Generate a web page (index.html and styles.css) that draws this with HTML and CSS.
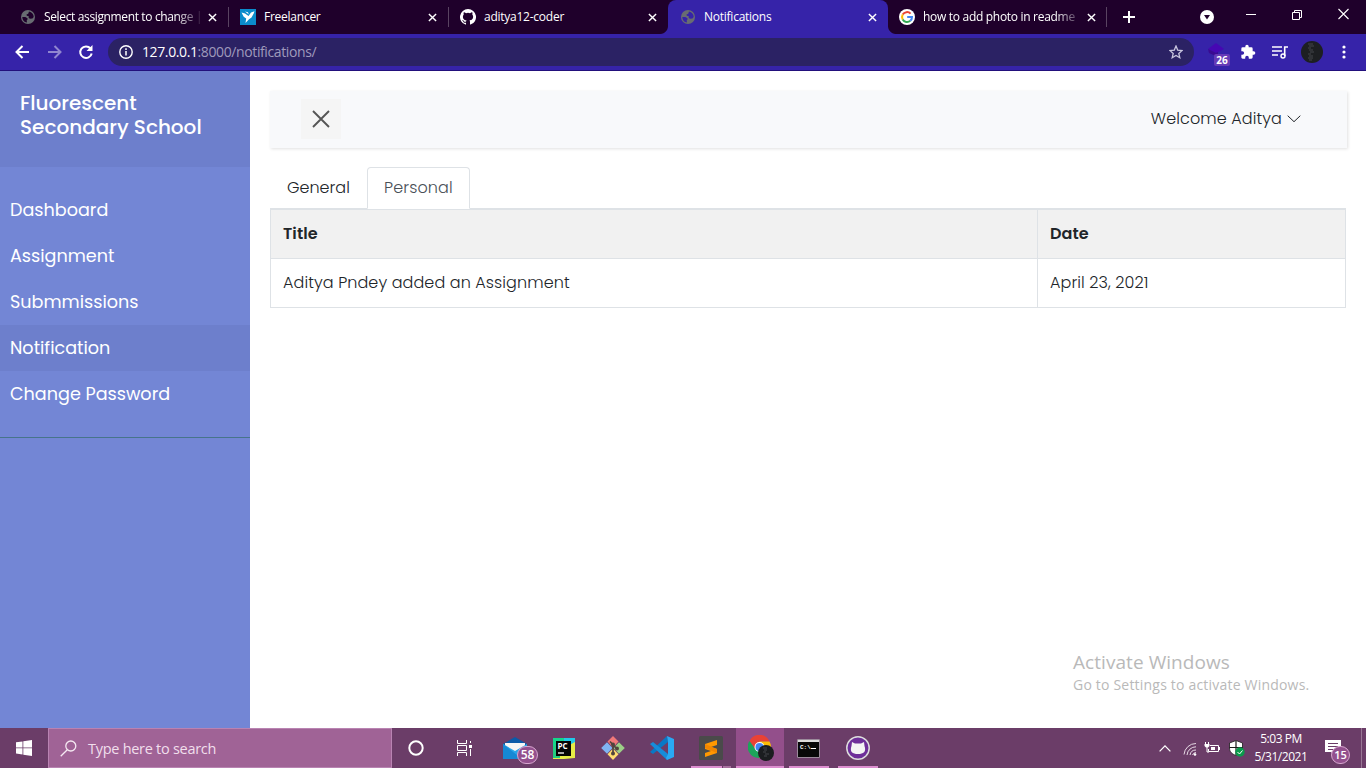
FILE: index.html
```html
<!DOCTYPE html>
<html lang="en">
<head>
<meta charset="utf-8">
<title>Notifications</title>
<link rel="stylesheet" href="styles.css">
</head>
<body>
<svg class="defs" width="0" height="0">
  <symbol id="globe" viewBox="0 0 16 16"><circle cx="8" cy="8" r="7" fill="#686c72"/><path d="M9 2.500c3 .5 4.700 2.800 4.700 5.500l-1.200 1.500-2.700.3-1.300-1.300.3-1.300-2-.4L6.500 5.500l1.700-.7zM2.300 8h3l2.200 1.200v1.300l-.8.800.3 2.200C4.300 13.300 2.300 11 2.300 8z" fill="currentColor"/></symbol>
  <symbol id="x" viewBox="0 0 10 10"><path d="m1 1 8 8M9 1 1 9" stroke="#fff" stroke-width="1.600" fill="none"/></symbol>
</svg>
<header class="tabs">
  <div class="tab"><svg class="fav"><use href="#globe"/></svg><span class="tab-title fade t1">Select assignment to change |</span><svg class="close"><use href="#x"/></svg></div>
  <div class="tab"><svg class="fav" viewBox="0 0 16 16"><path d="M0 0h16v16H0z" fill="#0b8bcb"/><path d="m1.500 3.500 3.500 1 3.500 2.500L11 3.500l3.500-1.200-.8 2.200-2.200 4-2.500 1.700L5.500 14l.7-4.500-2.500-1.700z" fill="#fff"/><path d="m5 2.500 3 .8.800 2.200z" fill="#fff"/></svg><span class="tab-title t2">Freelancer</span><svg class="close"><use href="#x"/></svg></div>
  <div class="tab nosep"><svg class="fav" viewBox="0 0 16 16"><path fill="#fff" d="M8 0a8 8 0 0 0-2.530 15.590c.400.070.550-.170.550-.380v-1.490c-2.230.480-2.700-.950-2.700-.950-.360-.920-.890-1.170-.890-1.170-.730-.500.050-.490.050-.490.810.060 1.240.830 1.240.830.720 1.230 1.870.880 2.330.670.070-.520.280-.880.510-1.080-1.780-.200-3.640-.890-3.640-3.950 0-.880.310-1.590.820-2.150-.080-.200-.360-1.020.080-2.120 0 0 .670-.210 2.200.820a7.600 7.600 0 0 1 4 0c1.530-1.040 2.200-.820 2.200-.820.440 1.100.160 1.920.080 2.120.510.560.820 1.270.820 2.150 0 3.070-1.870 3.750-3.650 3.950.290.250.540.730.540 1.480v2.200c0 .210.150.460.550.380A8 8 0 0 0 8 0"/></svg><span class="tab-title t3">aditya12-coder</span><svg class="close"><use href="#x"/></svg></div>
  <div class="tab active"><svg class="fav"><use href="#globe"/></svg><span class="tab-title t4">Notifications</span><svg class="close"><use href="#x"/></svg></div>
  <div class="tab last"><svg class="fav" viewBox="0 0 16 16"><circle cx="8" cy="8" r="8" fill="#fff"/><g fill="none" stroke-width="2"><path d="M11.600 4.600A5 5 0 0 0 3.700 5.600" stroke="#ea4335"/><path d="M3.700 5.600a5 5 0 0 0 0 4.800" stroke="#fbbc05"/><path d="M3.700 10.400a5 5 0 0 0 7.600 1.400" stroke="#34a853"/><path d="M11.300 11.800A5 5 0 0 0 13 8H8.200" stroke="#4285f4"/></g></svg><span class="tab-title fade t5">how to add photo in readme</span><svg class="close"><use href="#x"/></svg></div>
  <svg class="plus" viewBox="0 0 12 12"><path d="M6 0v12M0 6h12" stroke="#fff" stroke-width="2"/></svg>
  <svg class="guest" viewBox="0 0 14 14"><circle cx="7" cy="7" r="7" fill="#fff"/><path d="M4 5h6L7 9.500z" fill="#1f002b"/></svg>
  <svg class="win" viewBox="0 0 104 14"><g fill="none" stroke="#fff"><path d="M0 7.500h10M46.500 5.500h7v7h-7zM48.500 5.500v-2h7v7h-2"/><path d="m92.500 2 10 10m0-10-10 10" stroke-width="1.100"/></g></svg>
</header>
<nav class="toolbar">
  <svg class="nav-icons" viewBox="0 0 80 16"><g fill="none" stroke="#fff" stroke-width="2"><path d="M14 8H2M7.500 2 1.500 8l6 6"/><path d="M33 8h12M39.500 2l6 6-6 6" opacity=".45"/><path d="M75.500 4.500A5.800 5.800 0 1 0 76.700 9.500"/></g><path d="M77.500 1v6h-6z" fill="#fff"/></svg>
  <div class="omnibox">
    <svg class="info" viewBox="0 0 14 14"><circle cx="7" cy="7" r="6.200" fill="none" stroke="#fff" stroke-width="1.400"/><path d="M7 6v4.500M7 3.300v1.600" stroke="#fff" stroke-width="1.500"/></svg>
    <span class="url"><b>127.0.0.1</b>:8000/notifications/</span>
    <svg class="star" viewBox="0 0 14 14"><path d="m7 1 1.700 4.100 4.400.400-3.300 2.900 1 4.300L7 10.400l-3.800 2.300 1-4.300L.900 5.500l4.400-.400z" fill="none" stroke="#c9c6df" stroke-width="1.300"/></svg>
  </div>
  <div class="ext"><svg viewBox="0 0 20 16"><path d="m1 7 8-6 8 6-8 4z" fill="#4607b3"/><path d="m1 7 8 4 2-1v5L2 11z" fill="#3a0a91"/></svg><span class="ext-count">26</span></div>
  <svg class="puzzle" viewBox="0 0 24 24"><path fill="#fff" d="M20.500 11H19V7a2 2 0 0 0-2-2h-4V3.500a2.500 2.500 0 0 0-5 0V5H4a2 2 0 0 0-2 2v3.800h1.500a2.700 2.700 0 0 1 0 5.400H2V20c0 1.100.9 2 2 2h3.800v-1.500a2.700 2.700 0 0 1 5.400 0V22H17a2 2 0 0 0 2-2v-4h1.500a2.500 2.500 0 0 0 0-5"/></svg>
  <svg class="media" viewBox="0 0 16 14"><path d="M0 2h10M0 6h10M0 10h6" stroke="#fff" stroke-width="1.600"/><path d="M12.700 11V2H16" fill="none" stroke="#fff" stroke-width="1.600"/><circle cx="11" cy="11" r="2" fill="none" stroke="#fff" stroke-width="1.400"/></svg>
  <svg class="avatar" viewBox="0 0 22 22"><circle cx="11" cy="11" r="11" fill="#1d1f22"/><path d="M7 3h5M8 5h5M7 7h3M8 9h4M9 11h4M7 13h3M8 15h4M7 17h5M8 19h3" stroke="#45474b"/></svg>
  <svg class="kebab" viewBox="0 0 4 14"><g fill="#fff"><circle cx="2" cy="2" r="1.600"/><circle cx="2" cy="7" r="1.600"/><circle cx="2" cy="12" r="1.600"/></g></svg>
</nav>
<div class="page">
  <aside class="sidebar">
    <div class="brand"><h3>Fluorescent Secondary School</h3></div>
    <ul class="menu"><li>Dashboard</li><li>Assignment</li><li>Submmissions</li><li class="current">Notification</li><li>Change Password</li></ul>
  </aside>
  <main class="content">
    <div class="topbar"><button class="toggle"><svg viewBox="0 0 18 18"><path d="m1 1 16 16M17 1 1 17" stroke="#555" stroke-width="1.900"/></svg></button><div class="welcome"><span>Welcome Aditya</span><svg viewBox="0 0 14 8"><path d="m.7.700 6.300 6 6.300-6" fill="none" stroke="#212529"/></svg></div></div>
    <div class="nav-tabs"><a class="nav-link">General</a><a class="nav-link selected">Personal</a></div>
    <div class="table">
      <div class="row head"><div>Title</div><div>Date</div></div>
      <div class="row"><div>Aditya Pndey added an Assignment</div><div>April 23, 2021</div></div>
    </div>
  </main>
  <div class="watermark"><p class="wm1">Activate Windows</p><p class="wm2">Go to Settings to activate Windows.</p></div>
</div>
<footer class="taskbar">
  <div class="start"><svg width="16" height="16" viewBox="0 0 16 16"><path fill="#fff" d="m0 2.300 6.500-.9v6.100H0zM7.300 1.200 16 0v7.500H7.300zM0 8.300h6.500v6.200L0 13.600zM7.300 8.300H16V16l-8.700-1.200z"/></svg></div>
  <div class="search"><svg width="17" height="17" viewBox="0 0 17 17"><g fill="none" stroke="#f5e9f2" stroke-width="1.300"><circle cx="10.800" cy="6" r="5"/><path d="m7.300 9.700-6.600 6.500"/></g></svg><span>Type here to search</span></div>
  <div class="sys"><svg width="16" height="16" viewBox="0 0 16 16"><circle cx="8" cy="8" r="6.700" fill="none" stroke="#fff" stroke-width="2"/></svg></div>
  <div class="sys view"><svg width="17" height="16" viewBox="0 0 17 16"><path d="M1.500 0v3.500h9V0M1.500 16v-3.500h9V16M1.500 5.500h9v5h-9zM14.500 1v2M14.500 9v7" fill="none" stroke="#fff"/><path d="M13 5h3v3h-3z" fill="#fff"/></svg></div>
  <div class="app"><svg width="24" height="22" viewBox="0 0 24 22"><path d="M0 7 12 0l12 7v15H0z" fill="#0a5ba9"/><path d="M2 6h20v8H2z" fill="#f5f5f5"/><path d="m0 7 12 7 12-7v15H0z" fill="#27a5e9"/><path d="m0 7 19 15H0z" fill="#1688d4"/></svg><span class="badge mail">58</span></div>
  <div class="app"><svg width="22" height="22" viewBox="0 0 22 22"><path d="M0 1h11v10H0z" fill="#15d68b"/><path d="M11 1h11v9L11 12z" fill="#20caea"/><path d="M0 11h11l11-6v16l-11 1H0z" fill="#e6ed45"/><path d="M0 9h7v12H0z" fill="#22cd80"/><path d="M3 4h15v15H3z" fill="#050505"/><path d="M5 16h6" stroke="#fff" stroke-width="1.300"/><text x="4.500" y="12" class="pc">PC</text></svg></div>
  <div class="app"><svg width="24" height="24" viewBox="0 0 24 24"><path d="m12 0 5.500 5.500-5.500 6-5.500-6z" fill="#f07879"/><path d="M6 6.200 11.500 12 6 17.800.2 12z" fill="#80b5f3"/><path d="m18 6.200 5.800 5.800-5.800 5.800-5.500-5.800z" fill="#9cce87"/><path d="m12 12.500 5.500 5.800L12 24l-5.500-5.700z" fill="#ffdc70"/><path d="M9 5.500 15 12m-3-3v9" stroke="#51443e" stroke-width="1.700"/><g fill="#51443e"><circle cx="12" cy="8.500" r="2"/><circle cx="16" cy="12.500" r="2"/><circle cx="12" cy="17.500" r="2"/></g></svg></div>
  <div class="app"><svg width="24" height="24" viewBox="0 0 24 24"><path d="M0 16 17 0l1 6L3 18z" fill="#0878c5"/><path d="m0 8 3-2 15 12-1 6z" fill="#168cda"/><path d="m17 0 7 3v18l-7 3-1-2 2-4V6z" fill="#29a9f4"/></svg></div>
  <div class="app sub"><svg width="24" height="24" viewBox="0 0 24 24"><rect width="24" height="24" rx="1.500" fill="#4a4a4a"/><path d="m6 8 12-4v5L12 11l6 2v4L6 21v-4l6-2-6-2z" fill="#ff9800"/><path d="m6 8 12 5v4L6 12z" fill="#f08600"/></svg></div>
  <div class="app chrome"><svg width="26" height="26" viewBox="0 0 26 26"><path d="M1.500 6A11 11 0 0 1 21.500 6.500H11L6.500 13.500z" fill="#e94235"/><path d="M21.500 6.500A11 11 0 0 1 11 23l5-8-5-8.500z" fill="#fbbc05"/><path d="M1.500 6A11 11 0 0 0 11 23l5-8H8z" fill="#1da45a"/><circle cx="11.500" cy="12" r="5" fill="#fff"/><circle cx="11.500" cy="12" r="4" fill="#4285f4"/><circle cx="18" cy="18" r="8" fill="#1b1d20"/><path d="M15 13h4M16 15h3M15 17h3M17 19h4M16 21h3" stroke="#44474b"/></svg></div>
  <div class="app cmd"><svg width="23" height="19" viewBox="0 0 23 19"><path d="M.5.500h22v18H.5z" fill="#080808" stroke="#9b8b9b"/><path d="M1 1h21v2H1z" fill="#ddd"/><text x="3" y="10" class="cmd-text">C:\</text><path d="M14 9.500h5" stroke="#fff"/></svg></div>
  <div class="app gh"><svg width="24" height="24" viewBox="0 0 24 24"><circle cx="12" cy="12" r="11.200" fill="#6e2f99" stroke="#ddd" stroke-width="1.500"/><path d="m6 6 3 1.500h6L18 6l.5 4c2 6-1 8-6.500 8s-8.500-2-6.500-8z" fill="#f4f4f4"/></svg></div>
  <div class="tray">
    <svg class="chev" width="12" height="7" viewBox="0 0 12 7"><path d="m.6 6.400 5.400-5.500 5.400 5.500" fill="none" stroke="#fff" stroke-width="1.300"/></svg>
    <svg class="wifi" width="14" height="14" viewBox="0 0 14 14"><g fill="none" stroke="#e6d9e5"><path d="M1 12.500A12 12 0 0 1 13 1.500M4 13A9 9 0 0 1 13 4.800M7 13a6 6 0 0 1 6-5M9.500 13a4 4 0 0 1 3.500-2.500"/></g><circle cx="12" cy="12.500" r="1.300" fill="#fff"/></svg>
    <svg class="battery" width="16" height="12" viewBox="0 0 16 12"><path d="M6 3.500h8.500v6h-10V7M1.500 0v2M4.500 0v2M3 5v5h2M15.500 5v3" fill="none" stroke="#fff"/><path d="M.5 2h5v2L4 5.500H2L.5 4zM7 5h4v3H7z" fill="#fff"/></svg>
    <svg class="shield" width="17" height="17" viewBox="0 0 17 17"><path d="m8 .5 6.500 2.500v5c0 4-2.500 6-6.500 7.500-4-1.500-6.500-3.500-6.500-7.500V3z" fill="#fff" stroke="#1a1a1a" stroke-width=".8"/><path d="M8 1v14M1.500 7.500h13" stroke="#1a1a1a" stroke-width="1.200"/><circle cx="12" cy="12" r="4.700" fill="#0a9a4b"/><path d="m9.500 12 2 2 3-3.500" fill="none" stroke="#fff"/></svg>
    <div class="clock"><span class="time">5:03 PM</span><span class="date">5/31/2021</span></div>
    <div class="notif"><svg width="16" height="16" viewBox="0 0 16 16"><path d="M0 0h16v12H9v3l-3-3H0z" fill="#fff"/><path d="M3 3.500h10M3 6.500h10M3 9.500h10" stroke="#6b3d68"/></svg><span class="badge note">15</span></div>
  </div>
</footer>
</body>
</html>
```
FILE: styles.css
```css
* { box-sizing: border-box; }
body { margin: 0; width: 1366px; height: 768px; overflow: hidden; display: flex; flex-direction: column; background: #fff; font-family: "Open Sans", sans-serif; }
span { white-space: nowrap; }
svg { display: block; flex: none; }
.defs { position: absolute; }
h3, p, ul { margin: 0; padding: 0; list-style: none; }

/* Browser tabs */
.tabs { height: 34px; flex: none; background: #1f002b; display: flex; align-items: center; padding-left: 8px; }
.tab { width: 220px; height: 34px; flex: none; display: flex; align-items: center; padding-left: 12px; color: #fff; font-size: 12px; background: linear-gradient(#594361, #594361) no-repeat right 7px / 1px 20px; }
.tab:first-child { width: 221px; }
.tab:nth-child(2) { padding-left: 11px; }
.tab.nosep { width: 219px; padding-left: 11px; background: radial-gradient(circle at 0 0, #1f002b 7.5px, #3623a9 8.5px) no-repeat right bottom / 8px 8px; }
.tab.active { background: #3623a9; border-radius: 8px 8px 0 0; }
.tab.last { width: 219px; padding-left: 11px; background: linear-gradient(#594361, #594361) no-repeat right 7px / 1px 20px, radial-gradient(circle at 8px 0, #1f002b 7.5px, #3623a9 8.5px) no-repeat left bottom / 8px 8px; }
.fav { width: 16px; height: 16px; margin-right: 8px; color: #1f002b; }
.active .fav { color: #3623a9; }
.tab-title { width: 159px; line-height: 20px; letter-spacing: -.25px; }
.fade { mask-image: linear-gradient(90deg, #000 132px, transparent 160px); }
.close { width: 9px; height: 9px; margin-left: 5px; }
.plus { width: 12px; height: 12px; margin-left: 16px; }
.guest { width: 14px; height: 14px; margin-left: 65px; }
.win { width: 104px; height: 14px; margin: -6px 0 0 32px; }
.tab-title.t1 { letter-spacing: -.36px; }
.tab-title.t5 { letter-spacing: -.3px; }

/* Address bar */
.toolbar { height: 37px; flex: none; background: #3623a9; border-bottom: 1px solid #22107c; display: flex; align-items: center; padding-left: 15px; }
.nav-icons { width: 80px; height: 16px; }
.omnibox { width: 1086px; height: 28px; margin-left: 13px; border-radius: 14px; background: #2b2264; display: flex; align-items: center; padding: 0 11px; }
.info { width: 14px; height: 14px; margin-right: 9px; }
.url { flex: 1; color: #9f9abc; font-size: 14px; line-height: 18px; margin-top: -1px; letter-spacing: -.39px; }
.url b { font-weight: 400; color: #fff; }
.star { width: 14px; height: 14px; }
.ext { position: relative; width: 20px; height: 16px; margin: -4px 0 0 13px; }
.ext svg { width: 20px; height: 16px; }
.ext-count { position: absolute; left: 7px; top: 12px; width: 16px; height: 12px; border-radius: 2px; background: #663bb7; color: #fff; font: 700 10px/12px "Open Sans", sans-serif; text-align: center; }
.puzzle { width: 16px; height: 16px; margin-left: 13px; }
.media { width: 16px; height: 14px; margin-left: 16px; }
.avatar { width: 22px; height: 22px; margin-left: 13px; }
.kebab { width: 4px; height: 14px; margin-left: 19px; }

/* Page */
.page { position: relative; height: 657px; flex: none; display: flex; font-family: Poppins, Inter, sans-serif; font-weight: 300; font-size: 16px; color: #212529; }
.sidebar { width: 250px; background: #7386d5; color: #fff; }
.brand { height: 96px; padding: 20px; background: #6d7fcc; }
.brand h3 { font-size: 20px; line-height: 24px; font-weight: 500; }
.menu { padding: 20px 0; border-bottom: 1px solid #47748b; }
.menu li { height: 46px; padding-left: 10px; font-size: 17.6px; line-height: 46px; font-weight: 400; }
.menu .current { background: #6d7fcc; }
.content { width: 1116px; padding: 20px; }
.topbar { width: 1077px; height: 57px; background: #f8f9fb; box-shadow: 1px 1px 3px rgba(0,0,0,.12); display: flex; align-items: center; justify-content: space-between; padding: 0 46px 2px 31px; }
.toggle { width: 40px; height: 40px; border: 0; padding: 0; background: #f5f5f5; display: grid; place-items: center; }
.toggle svg { width: 18px; height: 18px; margin-top: 1px; }
.welcome { display: flex; align-items: center; gap: 5px; letter-spacing: .1px; }
.welcome svg { width: 14px; height: 8px; }
.nav-tabs { width: 1076px; display: flex; height: 42px; margin-top: 19px; border-bottom: 1px solid #dee2e6; }
.nav-link { height: 42px; padding: 0 17px; line-height: 41px; }
.selected { width: 103px; border: 1px solid #dee2e6; border-bottom-color: #fff; border-radius: 4px 4px 0 0; padding: 0 16px; line-height: 39px; background: #fff; color: #495057; letter-spacing: .12px; }
.nav-link:first-child { width: 97px; }
.table { width: 1076px; border: 1px solid #dee2e6; border-top: 0; letter-spacing: .09px; }
.row { display: grid; grid-template-columns: 766px 308px; height: 48px; line-height: 48px; }
.row > div { padding-left: 12px; }
.row > div + div { border-left: 1px solid #dee2e6; }
.head { height: 50px; border-top: 1px solid #dee2e6; border-bottom: 1px solid #dee2e6; background: #f1f1f1; font-weight: 600; letter-spacing: .1px; }
.watermark { position: absolute; left: 1073px; top: 579px; color: #b9b9b9; font-family: "Open Sans", sans-serif; }
.wm1 { font-size: 19px; line-height: 24px; font-weight: 400; letter-spacing: .06px; }
.wm2 { font-size: 14px; line-height: 22px; font-weight: 400; letter-spacing: .2px; }

/* Taskbar */
.taskbar { height: 40px; flex: none; background: #6b3d68; display: flex; color: #fff; }
.start, .sys { width: 48px; display: grid; place-items: center; }
.view { margin-right: 3px; }
.search { width: 344px; background: #a06396; border: 1px solid #b983b2; display: flex; align-items: center; gap: 11px; padding-left: 11px; color: #f1dfec; font-size: 14.5px; letter-spacing: -.28px; }
.app { position: relative; width: 49px; padding-right: 2px; display: grid; place-items: center; }
.badge { position: absolute; border: 1px solid #d7a6cf; border-radius: 10px; background: #93508e; color: #fff; text-align: center; }
.mail { left: 26px; top: 18px; width: 21px; height: 18px; font-size: 12px; line-height: 16px; font-weight: 600; }
.pc { font: 700 8px "Open Sans", sans-serif; fill: #fff; }
.cmd-text { font: 700 6px "Liberation Mono", monospace; fill: #fff; }
.sub { background: linear-gradient(90deg, #dc8dcf 31px, #6b3d68 31px, #6b3d68 32px, #a8709f 32px) no-repeat 4px 38px / 40px 2px; }
.chrome { padding-right: 0; background: linear-gradient(#dc8dcf, #dc8dcf) no-repeat 0 38px / 48px 2px, linear-gradient(#934f8b, #934f8b) no-repeat 0 0 / 48px 40px; }
.cmd, .gh { background: linear-gradient(#dc8dcf, #dc8dcf) no-repeat 4px 38px / 40px 2px; }
.tray { flex: 1; display: flex; align-items: center; padding-left: 276px; background: linear-gradient(#987794, #987794) no-repeat 478px 0 / 1px 40px; }
.wifi { margin: 2px 0 0 12px; }
.battery { margin-left: 7px; }
.shield { margin-left: 8px; }
.clock { width: 60px; margin-left: 6px; display: flex; flex-direction: column; align-items: center; font-size: 12px; line-height: 18px; letter-spacing: -.45px; }
.notif { position: relative; margin-left: 14px; }
.note { left: 6px; top: 6px; width: 19px; height: 18px; font-size: 11px; line-height: 16px; font-weight: 600; }
```
